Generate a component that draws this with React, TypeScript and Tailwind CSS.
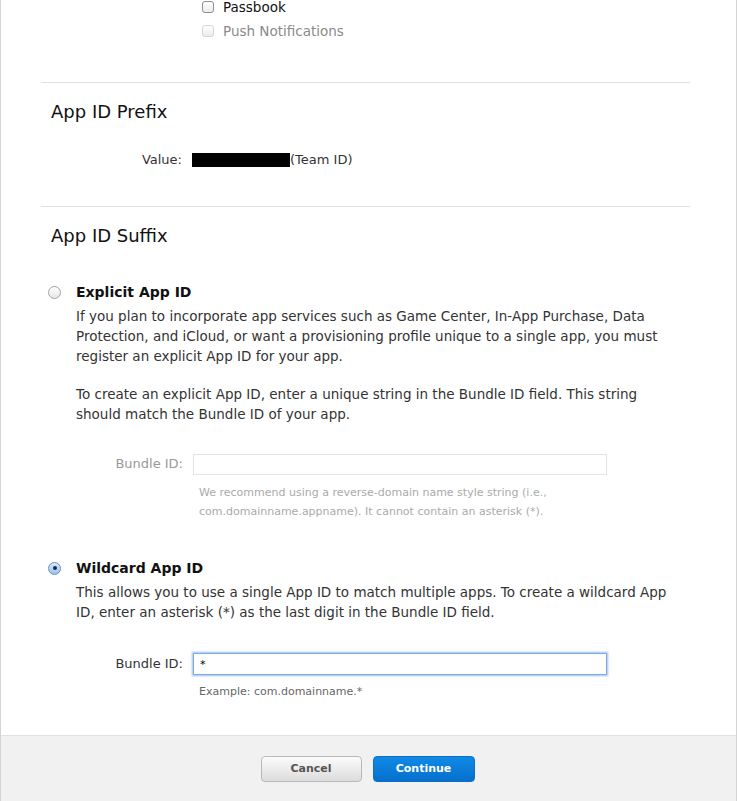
import { useState } from 'react';

// ── Piezas pequeñas ───────────────────────────────────────────────────────────

function Checkbox({ label, disabled }: { label: string; disabled?: boolean }) {
  return (
    <label className="flex items-center h-6 gap-[9px]">
      <span
        className={`w-[12px] h-[12px] rounded-[3px] border bg-gradient-to-b from-white to-[#ececec] ${
          disabled ? 'border-[#d6d6d6]' : 'border-[#8e8e8e]'
        }`}
      />
      <span className={disabled ? 'text-[#8a8a8a]' : 'text-[#111]'}>{label}</span>
    </label>
  );
}

function Radio({ checked }: { checked?: boolean }) {
  return (
    <span
      className={`w-[13px] h-[13px] rounded-full border flex items-center justify-center shrink-0 ${
        checked
          ? 'border-[#6a8fbf] bg-gradient-to-b from-[#d7e8fb] to-[#9cc1ee]'
          : 'border-[#a3a3a3] bg-gradient-to-b from-white to-[#e6e6e6]'
      }`}
    >
      {checked && <span className="w-[4px] h-[4px] rounded-full bg-[#1c2b44]" />}
    </span>
  );
}

function Seccion({ titulo }: { titulo: string }) {
  return (
    <div className="mx-[40px] w-[649px] border-t border-[#e2e2e2] pl-[10px] pt-[17px] text-[18px] text-[#111] leading-[24px]">
      {titulo}
    </div>
  );
}

// ── App ───────────────────────────────────────────────────────────────────────

export default function App() {
  const [valor, setValor] = useState('*');

  return (
    <div
      className="w-[737px] h-[801px] bg-white border-l border-r border-[#d4d4d4] flex flex-col text-[14px] text-[#222]"
      style={{ fontFamily: '"DejaVu Sans", Verdana, sans-serif' }}
    >
      <div className="flex-1">
        {/* Servicios */}
        <div className="pl-[201px] -mt-[5px] h-[87px] text-[13.5px]">
          <Checkbox label="Passbook" />
          <Checkbox label="Push Notifications" disabled />
        </div>

        {/* Prefijo */}
        <Seccion titulo="App ID Prefix" />
        <div className="flex items-center mt-[26px] h-[20px] text-[13px] text-[#333]">
          <span className="w-[181px] text-right">Value:</span>
          <span className="ml-[10px] w-[98px] h-[14px] bg-black" />
          <span>(Team ID)</span>
        </div>

        <div className="h-[36px]" />
        <Seccion titulo="App ID Suffix" />

        {/* Explícito */}
        <div className="mt-[34px] pl-[47px] flex items-center gap-[15px] h-[20px]">
          <Radio />
          <span className="font-bold text-[#111]">Explicit App ID</span>
        </div>
        <div className="pl-[75px] pr-[60px] text-[#333] leading-[20px] mt-[4px] text-[13.5px]">
          <p>
            If you plan to incorporate app services such as Game Center, In-App Purchase, Data
            Protection, and iCloud, or want a provisioning profile unique to a single app, you must
            register an explicit App ID for your app.
          </p>
          <p className="mt-[18px]">
            To create an explicit App ID, enter a unique string in the Bundle ID field. This string
            should match the Bundle ID of your app.
          </p>
        </div>

        <div className="flex items-center mt-[30px] h-[20px] text-[13px]">
          <span className="w-[182px] text-right text-[#999]">Bundle ID:</span>
          <div className="ml-[10px] w-[414px] h-[21px] border border-[#e4e4e4] bg-white" />
        </div>
        <p className="pl-[198px] pr-[120px] mt-[9px] text-[11px] leading-[19px] text-[#aaa]">
          We recommend using a reverse-domain name style string (i.e.,
          <br />
          com.domainname.appname). It cannot contain an asterisk (*).
        </p>

        {/* Comodín */}
        <div className="mt-[37px] pl-[47px] flex items-center gap-[15px] h-[20px]">
          <Radio checked />
          <span className="font-bold text-[#111]">Wildcard App ID</span>
        </div>
        <p className="pl-[75px] pr-[60px] text-[#333] leading-[20px] mt-[4px] text-[13.5px]">
          This allows you to use a single App ID to match multiple apps. To create a wildcard App
          ID, enter an asterisk (*) as the last digit in the Bundle ID field.
        </p>

        <div className="flex items-center mt-[31px] h-[22px] text-[13px]">
          <span className="w-[182px] text-right text-[#333]">Bundle ID:</span>
          <input
            value={valor}
            onChange={(e) => setValor(e.target.value)}
            className="ml-[10px] w-[414px] h-[22px] border border-[#7fa9dc] shadow-[0_0_2px_1px_rgba(95,150,220,0.6)] px-[6px] text-[11px] text-black outline-none"
          />
        </div>
        <p className="pl-[198px] mt-[7px] text-[11px] leading-[19px] text-[#666]">
          Example: com.domainname.*
        </p>
      </div>

      {/* Pie */}
      <div className="h-[66px] border-t border-[#e0e0e0] bg-[#f1f1f1] flex justify-center items-start pt-[20px] pr-[2px] gap-[11px]">
        <button className="w-[101px] h-[26px] rounded-[4px] border border-[#b9b9b9] bg-gradient-to-b from-[#fbfbfb] to-[#dcdcdc] text-[11px] font-bold text-[#555]">
          Cancel
        </button>
        <button className="w-[102px] h-[26px] rounded-[4px] border border-[#0a6fc2] bg-gradient-to-b from-[#0f8ae6] to-[#0670cc] text-[11px] font-bold text-white">
          Continue
        </button>
      </div>
    </div>
  );
}
